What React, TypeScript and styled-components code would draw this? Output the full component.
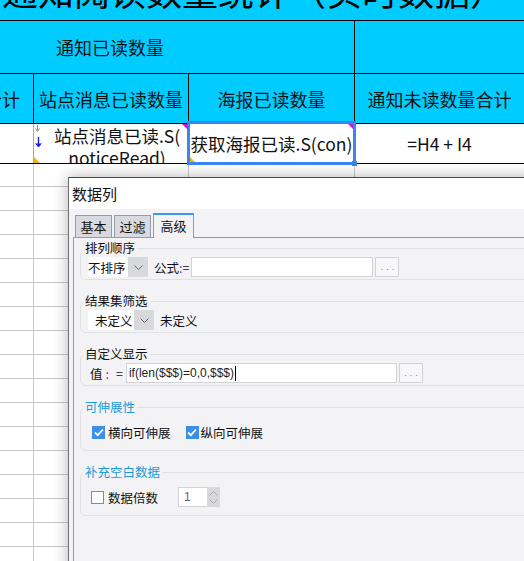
import styled, { createGlobalStyle } from 'styled-components';

const GlobalStyle = createGlobalStyle`
  html, body {
    margin: 0;
    padding: 0;
    overflow: hidden;
    background: #fff;
  }
  #root {
    width: 524px;
    height: 561px;
  }
`;

const CJK = `"Noto Sans CJK SC", "Microsoft YaHei", sans-serif`;

const Page = styled.div`
  position: relative;
  width: 524px;
  height: 561px;
  overflow: hidden;
  font-family: ${CJK};
`;

/* ---------- spreadsheet ---------- */

const Row = styled.div<{ $h: number; $line?: string; $bg?: string }>`
  display: grid;
  grid-template-columns: 34px 155px 166px 1fr;
  box-sizing: border-box;
  height: ${p => p.$h}px;
  border-bottom: 1px solid ${p => p.$line ?? '#000'};
  background: ${p => p.$bg ?? '#00ccff'};
`;

const Cell = styled.div<{ $line?: string; $span?: number; $noRight?: boolean; $fs?: number }>`
  grid-column: span ${p => p.$span ?? 1};
  box-sizing: border-box;
  border-right: ${p => (p.$noRight ? 'none' : `1px solid ${p.$line ?? '#000'}`)};
  display: flex;
  align-items: center;
  justify-content: center;
  font-size: ${p => p.$fs ?? 18}px;
  color: #111;
  white-space: nowrap;
  overflow: hidden;
  position: relative;
`;

const TitleCell = styled(Cell)`
  grid-column: 1 / -1;
  align-items: flex-start;
  justify-content: flex-end;
  padding-right: 18px;
`;

const TitleText = styled.span`
  display: block;
  font-size: 36px;
  line-height: 44px;
  margin-top: -32px;
  color: #000;
`;

const MergedHead = styled(Cell)`
  padding-right: 134px;
`;

const ClippedHead = styled(Cell)`
  justify-content: flex-end;
  padding-right: 13px;
`;

const WrapCell = styled(Cell)`
  align-items: flex-start;
  white-space: normal;
  text-align: center;
  line-height: 22px;
  padding: 1px 0 0 12px;
`;

const SelectedCell = styled(Cell)`
  overflow: visible;
`;

const Selection = styled.div`
  position: absolute;
  top: -3px;
  left: -2px;
  right: -2px;
  bottom: -2px;
  border: 3px solid #3a86f0;
  pointer-events: none;
  z-index: 2;
`;

const Handle = styled.div`
  position: absolute;
  right: -4px;
  bottom: -4px;
  width: 5px;
  height: 5px;
  background: #3a86f0;
`;

const CornerMark = styled.span<{ $corner: 'tr' | 'bl'; $size?: number }>`
  position: absolute;
  width: 0;
  height: 0;
  z-index: 3;
  ${p =>
    p.$corner === 'tr'
      ? `top: 0; right: 0;
         border-top: ${p.$size ?? 6}px solid #c81ad0;
         border-left: ${p.$size ?? 6}px solid transparent;`
      : `bottom: 0; left: 0;
         border-bottom: ${p.$size ?? 6}px solid #f2b705;
         border-right: ${p.$size ?? 6}px solid transparent;`}
`;

const ArrowMark = styled.svg<{ $top: number; $left: number }>`
  position: absolute;
  top: ${p => p.$top}px;
  left: ${p => p.$left}px;
`;

/* ---------- dialog ---------- */

const Dialog = styled.div`
  position: absolute;
  left: 68px;
  top: 177px;
  width: 640px;
  height: 420px;
  box-sizing: border-box;
  border: 1px solid #707070;
  border-top-color: #4a4a4a;
  background: #f3f3f5;
  box-shadow: 0 0 14px rgba(0, 0, 0, 0.3);
  display: flex;
  flex-direction: column;
  z-index: 10;
`;

const TitleBar = styled.div`
  height: 31px;
  flex: none;
  background: #fff;
  display: flex;
  align-items: center;
  padding-left: 3px;
  font-size: 15px;
  color: #111;
`;

const Body = styled.div`
  flex: 1;
  display: flex;
  flex-direction: column;
  padding: 4px 0 0 4px;
`;

const TabStrip = styled.div`
  display: flex;
  align-items: flex-end;
  gap: 2px;
  height: 25px;
  padding-left: 2px;
  margin-bottom: -1px;
  position: relative;
  z-index: 1;
`;

const Tab = styled.div<{ $active?: boolean; $w: number }>`
  box-sizing: border-box;
  width: ${p => p.$w}px;
  height: ${p => (p.$active ? 25 : 22)}px;
  margin-bottom: ${p => (p.$active ? 0 : 1)}px;
  border: 1px solid #8e9cb2;
  border-bottom: none;
  border-top: ${p => (p.$active ? '2px solid #3b9ae6' : '1px solid #8e9cb2')};
  background: ${p => (p.$active ? '#f3f3f5' : '#d9dadf')};
  display: flex;
  align-items: center;
  justify-content: center;
  padding-bottom: ${p => (p.$active ? 3 : 0)}px;
  font-size: 13px;
  color: #111;
`;

const Panel = styled.div`
  flex: 1;
  border-top: 1px solid #8e9cb2;
  border-left: 1px solid #8e9cb2;
  padding: 3px 0 0 6px;
  display: flex;
  flex-direction: column;
  gap: 14px;
`;

const Group = styled.fieldset<{ $pad: number }>`
  margin: 0;
  min-width: 0;
  padding: ${p => p.$pad}px 0;
  border: 1px solid #e0e1e5;
  border-radius: 6px;
`;

const Legend = styled.legend<{ $accent?: boolean }>`
  padding: 0 2px;
  margin-left: 2px;
  font-size: 12.5px;
  line-height: 14px;
  color: ${p => (p.$accent ? '#1a9ad9' : '#111')};
`;

const FieldRow = styled.div<{ $pl: number }>`
  display: flex;
  align-items: center;
  height: 20px;
  padding-left: ${p => p.$pl}px;
  font-size: 12.5px;
  color: #111;
`;

const Select = styled.div`
  display: flex;
  height: 20px;
`;

const SelectValue = styled.div<{ $w: number; $pl: number }>`
  width: ${p => p.$w}px;
  box-sizing: border-box;
  padding-left: ${p => p.$pl}px;
  background: #fff;
  display: flex;
  align-items: center;
  white-space: nowrap;
`;

const SelectArrow = styled.div`
  width: 20px;
  background: #d8d9dd;
  display: flex;
  align-items: center;
  justify-content: center;
`;

const Label = styled.span<{ $ml?: number }>`
  margin-left: ${p => p.$ml ?? 0}px;
  white-space: nowrap;
`;

const Colon = styled.span<{ $ml?: number }>`
  color: #8a2a8a;
  margin-left: ${p => p.$ml ?? 0}px;
`;

const TextInput = styled.div<{ $w: number; $ml?: number }>`
  width: ${p => p.$w}px;
  height: 20px;
  margin-left: ${p => p.$ml ?? 0}px;
  box-sizing: border-box;
  border: 1px solid #d3d3d7;
  background: #fff;
  display: flex;
  align-items: center;
  padding-left: 2px;
  font-family: "Liberation Sans", Arial, sans-serif;
  font-size: 12px;
  color: #222;
`;

const Caret = styled.span`
  display: inline-block;
  width: 1px;
  height: 15px;
  background: #000;
  margin-left: 1px;
`;

const DotsButton = styled.div`
  width: 24px;
  height: 20px;
  margin-left: 2px;
  box-sizing: border-box;
  border: 1px solid #d3d3d7;
  background: #f7f7f9;
  display: flex;
  align-items: flex-end;
  justify-content: center;
  padding: 0 0 4px 3px;
  font-family: "Liberation Sans", Arial, sans-serif;
  font-size: 9px;
  line-height: 9px;
  letter-spacing: 3px;
  color: #7a6a8a;
`;

const CheckBox = styled.span<{ $on?: boolean; $ml?: number }>`
  width: 13px;
  height: 13px;
  flex: none;
  margin-left: ${p => p.$ml ?? 0}px;
  box-sizing: border-box;
  border: ${p => (p.$on ? 'none' : '1.5px solid #8a8a8a')};
  background: ${p => (p.$on ? '#3b8fe6' : '#fff')};
  display: flex;
  align-items: center;
  justify-content: center;
`;

const Spin = styled.div<{ $ml: number }>`
  display: flex;
  height: 20px;
  margin-left: ${p => p.$ml}px;
`;

const SpinField = styled.div`
  width: 29px;
  box-sizing: border-box;
  border: 1px solid #d3d3d7;
  border-right: none;
  background: #fff;
  display: flex;
  align-items: center;
  padding-left: 5px;
  font-family: "Liberation Sans", Arial, sans-serif;
  font-size: 12px;
  color: #6b5a9a;
`;

const SpinArrows = styled.div`
  width: 13px;
  background: #d9d9dc;
  display: flex;
  flex-direction: column;
  align-items: center;
  justify-content: space-around;
  padding: 2px 0;
  box-sizing: border-box;
`;

function Chevron({ up = false, color = '#666' }: { up?: boolean; color?: string }) {
  return (
    <svg width="9" height="5" viewBox="0 0 9 5">
      <polyline
        points={up ? '0.5,4.5 4.5,0.5 8.5,4.5' : '0.5,0.5 4.5,4.5 8.5,0.5'}
        fill="none"
        stroke={color}
        strokeWidth="1"
      />
    </svg>
  );
}

function Check() {
  return (
    <svg width="10" height="9" viewBox="0 0 10 9">
      <polyline points="1,4.5 3.8,7.2 9,1.5" fill="none" stroke="#fff" strokeWidth="1.8" />
    </svg>
  );
}

const gridRows = Array.from({ length: 17 }, (_, i) => (i === 0 ? 23 : 24));

export default function App() {
  return (
    <Page>
      <GlobalStyle />

      <Row $h={21}>
        <TitleCell $noRight>
          <TitleText>通知阅读数量统计（实时数据）</TitleText>
        </TitleCell>
      </Row>

      <Row $h={53}>
        <MergedHead $span={3}>通知已读数量</MergedHead>
        <Cell $noRight />
      </Row>

      <Row $h={50}>
        <ClippedHead>合计</ClippedHead>
        <Cell>站点消息已读数量</Cell>
        <Cell>海报已读数量</Cell>
        <Cell $noRight>通知未读数量合计</Cell>
      </Row>

      <Row $h={40} $bg="#fff">
        <Cell $line="#a8a8a8" />
        <WrapCell $line="#a8a8a8" $fs={17.5}>
          <ArrowMark $top={1} $left={1} width="5" height="7" viewBox="0 0 5 7">
            <line x1="2.5" y1="0" x2="2.5" y2="5" stroke="#8a8a8a" strokeWidth="1" />
            <polyline points="0.5,3.5 2.5,6.5 4.5,3.5" fill="none" stroke="#8a8a8a" strokeWidth="1" />
          </ArrowMark>
          <ArrowMark $top={13} $left={1} width="7" height="11" viewBox="0 0 7 11">
            <line x1="3.5" y1="0" x2="3.5" y2="9" stroke="#1e1ee8" strokeWidth="1.4" />
            <polyline points="0.8,6.5 3.5,10 6.2,6.5" fill="#1e1ee8" stroke="#1e1ee8" strokeWidth="1" />
          </ArrowMark>
          <CornerMark $corner="tr" />
          <CornerMark $corner="bl" />
          <span>
            站点消息已读.S(
            <br />
            noticeRead)
          </span>
        </WrapCell>
        <SelectedCell $line="#a8a8a8" $fs={17.5}>
          获取海报已读.S(con)
          <Selection>
            <CornerMark $corner="tr" $size={5} />
            <CornerMark $corner="bl" $size={5} />
            <Handle />
          </Selection>
        </SelectedCell>
        <Cell $noRight $fs={17.5}>=H4 + I4</Cell>
      </Row>

      {gridRows.map((h, i) => (
        <Row key={i} $h={h} $bg="#fff" $line="#c8c8c8">
          <Cell $line="#c8c8c8" />
          <Cell $line="#c8c8c8" />
          <Cell $line="#c8c8c8" />
          <Cell $noRight />
        </Row>
      ))}

      <Dialog>
        <TitleBar>数据列</TitleBar>
        <Body>
          <TabStrip>
            <Tab $w={37}>基本</Tab>
            <Tab $w={37}>过滤</Tab>
            <Tab $w={41} $active>
              高级
            </Tab>
          </TabStrip>
          <Panel>
            <Group $pad={2}>
              <Legend>排列顺序</Legend>
              <FieldRow $pl={7}>
                <Select>
                  <SelectValue $w={40} $pl={0}>
                    不排序
                  </SelectValue>
                  <SelectArrow>
                    <Chevron />
                  </SelectArrow>
                </Select>
                <Label $ml={6}>
                  公式<Colon>:</Colon>=
                </Label>
                <TextInput $w={182} $ml={2} />
                <DotsButton>...</DotsButton>
              </FieldRow>
            </Group>

            <Group $pad={2}>
              <Legend>结果集筛选</Legend>
              <FieldRow $pl={7}>
                <Select>
                  <SelectValue $w={46} $pl={7}>
                    未定义
                  </SelectValue>
                  <SelectArrow>
                    <Chevron />
                  </SelectArrow>
                </Select>
                <Label $ml={6}>未定义</Label>
              </FieldRow>
            </Group>

            <Group $pad={2}>
              <Legend>自定义显示</Legend>
              <FieldRow $pl={9}>
                <Label>值</Label>
                <Colon $ml={3}>:</Colon>
                <Label $ml={7}>=</Label>
                <TextInput $w={271} $ml={3}>
                  if(len($$$)=0,0,$$$)
                  <Caret />
                </TextInput>
                <DotsButton>...</DotsButton>
              </FieldRow>
            </Group>

            <Group $pad={8}>
              <Legend $accent>可伸展性</Legend>
              <FieldRow $pl={11}>
                <CheckBox $on>
                  <Check />
                </CheckBox>
                <Label $ml={3}>横向可伸展</Label>
                <CheckBox $on $ml={15}>
                  <Check />
                </CheckBox>
                <Label $ml={2}>纵向可伸展</Label>
              </FieldRow>
            </Group>

            <Group $pad={8}>
              <Legend $accent>补充空白数据</Legend>
              <FieldRow $pl={10}>
                <CheckBox />
                <Label $ml={4}>数据倍数</Label>
                <Spin $ml={20}>
                  <SpinField>1</SpinField>
                  <SpinArrows>
                    <Chevron up color="#a8a8a8" />
                    <Chevron color="#a8a8a8" />
                  </SpinArrows>
                </Spin>
              </FieldRow>
            </Group>
          </Panel>
        </Body>
      </Dialog>
    </Page>
  );
}
